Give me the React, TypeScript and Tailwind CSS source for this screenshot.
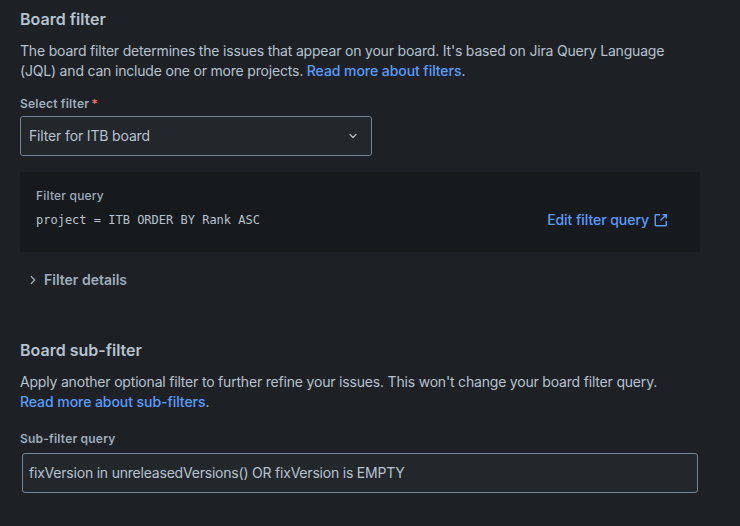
import { ChevronDown, ChevronRight } from "lucide-react"

const ExternalIcon = () => (
  <svg width="16" height="16" viewBox="0 0 16 16" fill="none" stroke="currentColor" strokeWidth="1.4" className="ml-[4px]">
    <path d="M7 2.75H3a.75.75 0 0 0-.75.75v9.5c0 .41.34.75.75.75h9.5a.75.75 0 0 0 .75-.75V9" />
    <path d="M9.5 2.75h3.75V6.5M13 3 7.5 8.5" />
  </svg>
)

export default function App() {
  return (
    <main className="w-[740px] h-[526px] overflow-hidden bg-[#1D2125] text-[#B6C2CF] text-[14px] leading-[20px] font-['Inter',sans-serif]">
      <div className="pl-[20px] pr-[40px] pt-[9px]">
        <h2 className="text-[16px] leading-[20px] font-semibold">Board filter</h2>
        <p className="mt-[12px] tracking-[-0.19px]">
          The board filter determines the issues that appear on your board. It's based on Jira Query Language
          <br />
          (JQL) and can include one or more projects. <a className="font-medium tracking-[-0.06px] text-[#579DFF]">Read more about filters</a>.
        </p>
        <div className="mt-[15px] text-[12px] leading-[16px] font-semibold tracking-[0.2px] text-[#9FADBC]">
          Select filter<span className="text-[#F87168] ml-[2px]">*</span>
        </div>
        <div className="mt-[4px] w-[352px] h-[40px] flex items-center justify-between pl-[8px] pr-[12px] bg-[#22272B] border border-[#738496] rounded-[3px]">
          <span className="tracking-[-0.15px]">Filter for ITB board</span>
          <ChevronDown size={12} strokeWidth={2.4} />
        </div>
        <div className="mt-[16px] w-[680px] h-[80px] bg-[#161A1D] rounded-[3px] pl-[16px] pr-[31px] pt-[16px] flex justify-between">
          <div>
            <div className="text-[12px] leading-[16px] font-medium tracking-[0.2px] text-[#9FADBC]">Filter query</div>
            <code className="block mt-[6px] text-[12px] leading-[20px] font-['DejaVu_Sans_Mono',monospace]">project = ITB ORDER BY Rank ASC</code>
          </div>
          <a className="flex items-center h-[20px] mt-[22px] font-medium tracking-[-0.05px] text-[#579DFF]">
            Edit filter query
            <ExternalIcon />
          </a>
        </div>
        <div className="mt-[18px] flex items-center font-semibold text-[#9FADBC]">
          <ChevronRight size={14} strokeWidth={2.2} className="ml-[6px] mr-[4px]" />
          Filter details
        </div>
        <h2 className="mt-[50px] text-[16px] leading-[20px] font-semibold">Board sub-filter</h2>
        <p className="mt-[12px] tracking-[-0.19px]">
          Apply another optional filter to further refine your issues. This won't change your board filter query.
          <br />
          <a className="font-medium tracking-[-0.06px] text-[#579DFF]">Read more about sub-filters</a>.
        </p>
        <div className="mt-[19px] text-[12px] leading-[16px] font-semibold tracking-[0.2px] text-[#9FADBC]">Sub-filter query</div>
        <div className="mt-[6px] ml-[2px] w-[676px] h-[40px] flex items-center pl-[6px] tracking-[-0.21px] bg-[#22272B] border border-[#738496] rounded-[3px]">
          fixVersion in unreleasedVersions() OR fixVersion is EMPTY
        </div>
      </div>
    </main>
  )
}
